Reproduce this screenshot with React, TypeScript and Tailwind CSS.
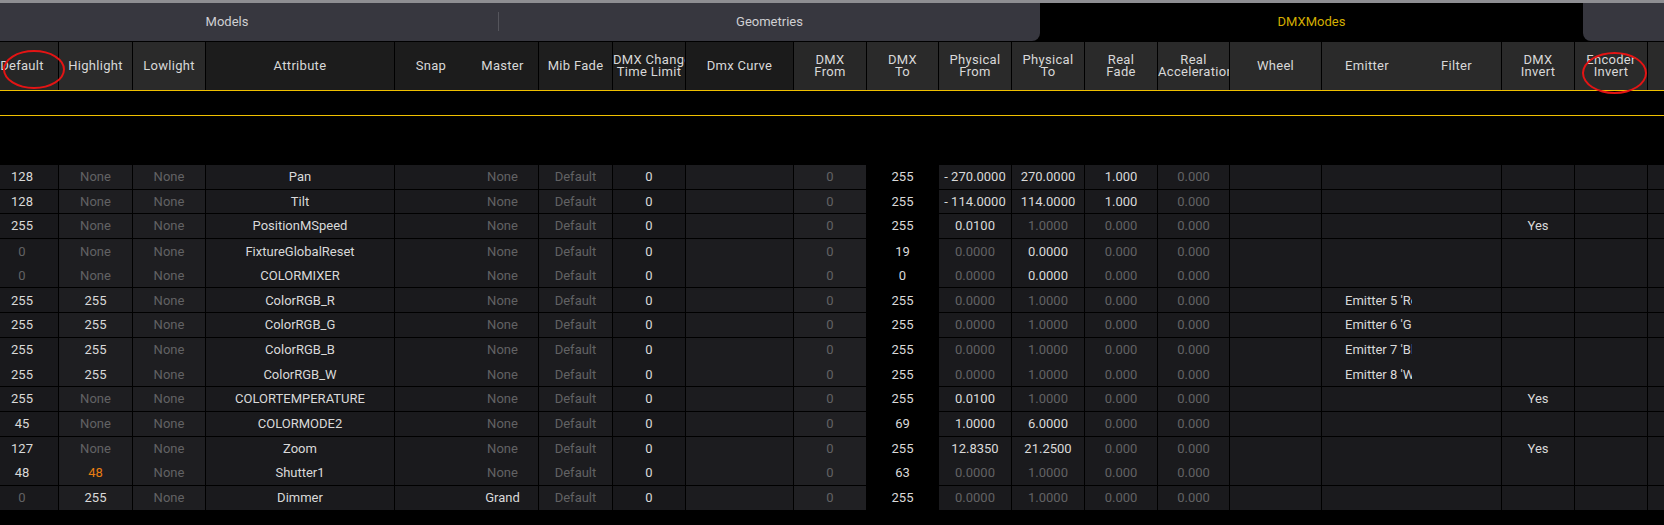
import React from 'react';

type Col = {
  w: string;
  head: string;
  cell: string;
  label: string[];
  noLine?: boolean;
};

// column widths / backgrounds, left to right (table is scrolled 14px to the left)
const cols: Col[] = [
  { w: 'w-[73px]', head: 'bg-[#262626]', cell: 'bg-[#19191c]', label: ['Default'] },
  { w: 'w-[74px]', head: 'bg-[#2a2a2a]', cell: 'bg-[#1e1e21]', label: ['Highlight'] },
  { w: 'w-[73px]', head: 'bg-[#2a2a2a]', cell: 'bg-[#1e1e21]', label: ['Lowlight'] },
  { w: 'w-[189px]', head: 'bg-[#1c1c1c]', cell: 'bg-[#1a1a1d]', label: ['Attribute'] },
  { w: 'w-[72px]', head: 'bg-[#1c1c1c]', cell: 'bg-[#1a1a1d]', label: ['Snap'], noLine: true },
  { w: 'w-[72px]', head: 'bg-[#1c1c1c]', cell: 'bg-[#1a1a1d]', label: ['Master'] },
  { w: 'w-[74px]', head: 'bg-[#1e1e1e]', cell: 'bg-[#1c1c1f]', label: ['Mib Fade'] },
  { w: 'w-[73px]', head: 'bg-[#1e1e1e]', cell: 'bg-[#18181b]', label: ['DMX Change', 'Time Limit'] },
  { w: 'w-[108px]', head: 'bg-[#1b1b1b]', cell: 'bg-[#1c1c1f]', label: ['Dmx Curve'] },
  { w: 'w-[73px]', head: 'bg-[#282828]', cell: 'bg-[#202023]', label: ['DMX', 'From'] },
  { w: 'w-[72px]', head: 'bg-[#2a2a2a]', cell: 'bg-black', label: ['DMX', 'To'] },
  { w: 'w-[73px]', head: 'bg-[#2a2a2a]', cell: 'bg-[#1a1a1d]', label: ['Physical', 'From'] },
  { w: 'w-[73px]', head: 'bg-[#2a2a2a]', cell: 'bg-[#1a1a1d]', label: ['Physical', 'To'] },
  { w: 'w-[73px]', head: 'bg-[#2a2a2a]', cell: 'bg-[#1a1a1d]', label: ['Real', 'Fade'] },
  { w: 'w-[72px]', head: 'bg-[#2a2a2a]', cell: 'bg-[#1a1a1d]', label: ['Real', 'Acceleration'] },
  { w: 'w-[92px]', head: 'bg-[#2a2a2a]', cell: 'bg-[#1a1a1d]', label: ['Wheel'] },
  { w: 'w-[90px]', head: 'bg-[#2a2a2a]', cell: 'bg-[#1a1a1d]', label: ['Emitter'], noLine: true },
  { w: 'w-[90px]', head: 'bg-[#2a2a2a]', cell: 'bg-[#1a1a1d]', label: ['Filter'] },
  { w: 'w-[73px]', head: 'bg-[#2a2a2a]', cell: 'bg-[#1a1a1d]', label: ['DMX', 'Invert'] },
  { w: 'w-[73px]', head: 'bg-[#2a2a2a]', cell: 'bg-[#1a1a1d]', label: ['Encoder', 'Invert'] },
  { w: 'w-[73px]', head: 'bg-[#2a2a2a]', cell: 'bg-[#1a1a1d]', label: [''] },
];

type Row = { cells: string[]; open?: boolean };

// '~' = dimmed value, '!' = highlighted (orange)
const r = (
  def: string,
  hl: string,
  attr: string,
  master: string,
  to: string,
  pf: string,
  pt: string,
  rf: string,
  emitter = '',
  inv = '',
  open = false
): Row => ({
  cells: [def, hl, '~None', attr, '', master, '~Default', '0', '', '~0', to, pf, pt, rf, '~0.000', '', emitter, '', inv, '', ''],
  open,
});

const rows: Row[] = [
  r('128', '~None', 'Pan', '~None', '255', '- 270.0000', '270.0000', '1.000'),
  r('128', '~None', 'Tilt', '~None', '255', '- 114.0000', '114.0000', '1.000'),
  r('255', '~None', 'PositionMSpeed', '~None', '255', '0.0100', '~1.0000', '~0.000', '', 'Yes'),
  r('~0', '~None', 'FixtureGlobalReset', '~None', '19', '~0.0000', '0.0000', '~0.000', '', '', true),
  r('~0', '~None', 'COLORMIXER', '~None', '0', '~0.0000', '0.0000', '~0.000'),
  r('255', '255', 'ColorRGB_R', '~None', '255', '~0.0000', '~1.0000', '~0.000', "Emitter 5 'Red'"),
  r('255', '255', 'ColorRGB_G', '~None', '255', '~0.0000', '~1.0000', '~0.000', "Emitter 6 'Green'"),
  r('255', '255', 'ColorRGB_B', '~None', '255', '~0.0000', '~1.0000', '~0.000', "Emitter 7 'Blue'", '', true),
  r('255', '255', 'ColorRGB_W', '~None', '255', '~0.0000', '~1.0000', '~0.000', "Emitter 8 'White'"),
  r('255', '~None', 'COLORTEMPERATURE', '~None', '255', '0.0100', '~1.0000', '~0.000', '', 'Yes'),
  r('45', '~None', 'COLORMODE2', '~None', '69', '1.0000', '6.0000', '~0.000'),
  r('127', '~None', 'Zoom', '~None', '255', '12.8350', '21.2500', '~0.000', '', 'Yes', true),
  r('48', '!48', 'Shutter1', '~None', '63', '~0.0000', '~1.0000', '~0.000'),
  r('~0', '255', 'Dimmer', 'Grand', '255', '~0.0000', '~1.0000', '~0.000'),
];

const Value: React.FC<{ v: string }> = ({ v }) => {
  if (v.startsWith('~')) return <span className="text-[#626264]">{v.slice(1)}</span>;
  if (v.startsWith('!')) return <span className="text-[#e87d12]">{v.slice(1)}</span>;
  return <span className="text-[#d9d9d9]">{v}</span>;
};

const App: React.FC = () => {
  return (
    <div className="relative w-[1664px] h-[525px] overflow-hidden bg-black [font-family:Roboto,_sans-serif] text-[13px]">
      {/* top strip */}
      <div className="h-[3px] bg-[#8e8e92]"></div>

      {/* Tabs */}
      <div className="flex h-[38px] bg-black">
        <div className="flex w-[1040px] bg-[#37373f] rounded-br-[8px]">
          <div className="w-[498px] pr-[44px] flex items-center justify-center text-[#cfcfd2]">Models</div>
          <div className="w-px h-[19px] mt-[9px] bg-[#55555c]"></div>
          <div className="flex-1 flex items-center justify-center text-[#cfcfd2]">Geometries</div>
        </div>
        <div className="w-[543px] flex items-center justify-center text-[#d3ad00]">DMXModes</div>
        <div className="flex-1 bg-[#37373f] rounded-bl-[8px]"></div>
      </div>

      {/* Header */}
      <div className="flex -ml-[14px] h-[50px] border-t border-black border-b border-b-[#f0c000]">
        {cols.map((c, i) => (
          <div
            key={i}
            className={`${c.w} ${c.head} shrink-0 overflow-hidden flex flex-col items-center justify-center text-center text-[#d8d8d8] leading-[12px] tracking-[0.3px] whitespace-nowrap ${c.noLine ? '' : 'border-r border-black'}`}
          >
            {c.label.map((l, j) => (
              <div key={j} className="w-full">{l}</div>
            ))}
          </div>
        ))}
      </div>

      {/* filter line */}
      <div className="h-[25px] border-b border-[#f0c000]"></div>
      <div className="h-[49px]"></div>

      {/* Rows */}
      <div className="-ml-[14px]">
        {rows.map((row, ri) => (
          <div key={ri} className={`flex h-[24.7px] ${row.open ? '' : 'border-b border-black'}`}>
            {row.cells.map((v, ci) => {
              const c = cols[ci];
              const emitter = ci === 16;
              return (
                <div
                  key={ci}
                  className={`${c.w} ${c.cell} shrink-0 overflow-hidden whitespace-nowrap flex items-center ${emitter ? 'justify-start pl-[23px]' : 'justify-center'} ${c.noLine ? '' : 'border-r border-black'}`}
                >
                  {v && <Value v={v} />}
                </div>
              );
            })}
          </div>
        ))}
      </div>

      {/* red annotation circles */}
      <div className="absolute left-[3px] top-[50px] w-[62px] h-[39px] rounded-[50%] border-2 border-[#e41414]"></div>
      <div className="absolute left-[1582px] top-[52px] w-[65px] h-[42px] rounded-[50%] border-2 border-[#e41414]"></div>
    </div>
  );
};

export default App;
